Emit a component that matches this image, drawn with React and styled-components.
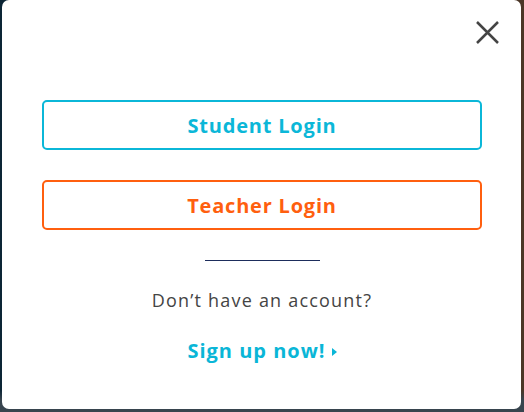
import React from 'react'
import styled, { createGlobalStyle } from 'styled-components'

const Global = createGlobalStyle`
  html, body {
    margin: 0;
    padding: 0;
  }
  body {
    width: 524px;
    height: 412px;
    overflow: hidden;
    background: linear-gradient(90deg, #0b2535 0%, #2f3f4b 50%, #4b3626 100%);
    font-family: "Open Sans", "Noto Sans", sans-serif;
  }
`

const Backdrop = styled.div`
  height: 412px;
  padding: 0 3px 3px 2px;
  box-sizing: border-box;
  background: linear-gradient(180deg, transparent 0, transparent 390px, #37444e 400px);
`

const Modal = styled.div`
  background: #fff;
  height: 409px;
  border-radius: 7px;
  box-sizing: border-box;
  padding: 19px 20px 0 40px;
  display: flex;
  flex-direction: column;
`

const Header = styled.div`
  display: flex;
  justify-content: flex-end;
  height: 81px;
`

const Close = styled.button`
  width: 28px;
  height: 28px;
  padding: 0;
  border: 0;
  background: none;
  cursor: pointer;
  svg { display: block; }
`

const Buttons = styled.div`
  display: flex;
  flex-direction: column;
  gap: 30px;
  padding-right: 19px;
`

const LoginButton = styled.button`
  height: 50px;
  border: 2px solid ${p => p.$color};
  border-radius: 5px;
  background: #fff;
  color: ${p => p.$color};
  font-family: "Open Sans", "Noto Sans", sans-serif;
  font-weight: 700;
  font-size: 20px;
  letter-spacing: 0.8px;
  cursor: pointer;
`

const Divider = styled.hr`
  width: 115px;
  margin: 30px auto 0;
  border: 0;
  border-top: 1px solid #1d2d5c;
  position: relative;
  left: -9px;
`

const Prompt = styled.p`
  margin: 27px 0 0;
  text-align: center;
  color: #444;
  font-size: 18px;
  font-weight: 500;
  letter-spacing: 1.2px;
  padding-right: 19px;
`

const SignUp = styled.a`
  margin-top: 25px;
  align-self: center;
  margin-right: 19px;
  display: flex;
  align-items: center;
  gap: 6px;
  color: #0ab6d7;
  font-size: 20px;
  font-weight: 700;
  letter-spacing: 1px;
  text-decoration: none;
  cursor: pointer;
`

const Arrow = styled.span`
  width: 0;
  height: 0;
  border-top: 4.5px solid transparent;
  border-bottom: 4.5px solid transparent;
  border-left: 5px solid #0ab6d7;
  margin-top: 2px;
`

const App = () => {
  return (
    <>
      <Global />
      <Backdrop>
        <Modal>
          <Header>
            <Close aria-label="Close">
              <svg width="28" height="28" viewBox="0 0 28 28">
                <path d="M4 3 L25 24 M25 3 L4 24" stroke="#444" strokeWidth="2.5" />
              </svg>
            </Close>
          </Header>
          <Buttons>
            <LoginButton $color="#0bb7d8">Student Login</LoginButton>
            <LoginButton $color="#ff5f0f">Teacher Login</LoginButton>
          </Buttons>
          <Divider />
          <Prompt>Don’t have an account?</Prompt>
          <SignUp>
            Sign up now!
            <Arrow />
          </SignUp>
        </Modal>
      </Backdrop>
    </>
  )
}

export default App
